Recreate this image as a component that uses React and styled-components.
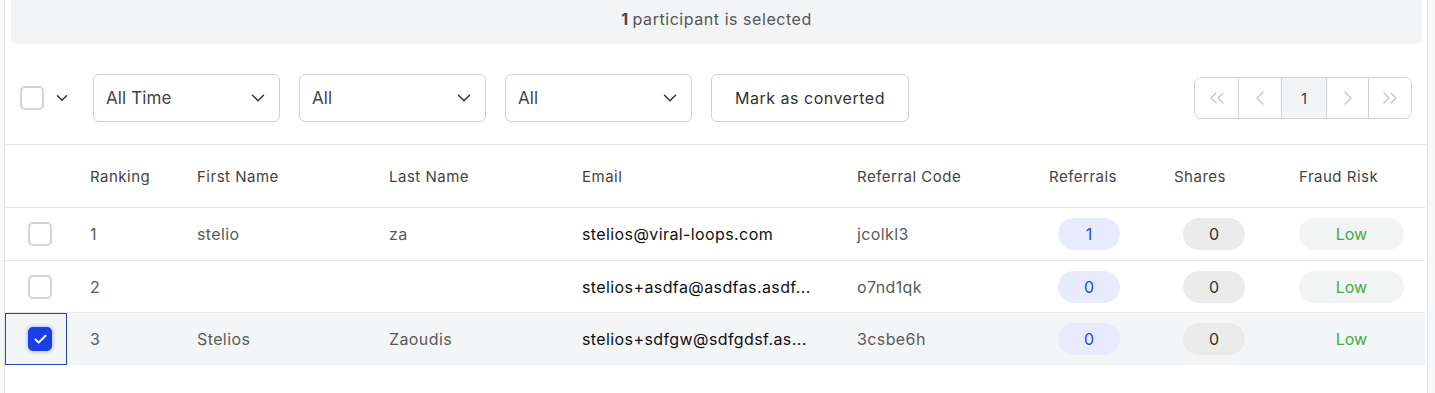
import React from "react";
import styled, { createGlobalStyle } from "styled-components";
import {
  ChevronDown,
  ChevronLeft,
  ChevronRight,
  ChevronsLeft,
  ChevronsRight,
  Check,
} from "lucide-react";

const GlobalStyle = createGlobalStyle`
  body {
    margin: 0;
    background: #f6f7f8;
    font-family: Inter, "Noto Sans", sans-serif;
  }
`;

//Outer page with side gutters
const Page = styled.div`
  padding: 0 7px 0 4px;
`;

//White panel holding everything
const Panel = styled.div`
  background: #fff;
  border-left: 1px solid #e4e5e7;
  border-right: 1px solid #e4e5e7;
  height: 393px;
  box-sizing: border-box;
`;

//Grey strip with the selection count
const Banner = styled.div`
  margin: 0 5px 0 6px;
  height: 44px;
  background: #f3f4f6;
  border-radius: 0 0 6px 6px;
  display: flex;
  align-items: center;
  justify-content: center;
  font-size: 16px;
  letter-spacing: 0.55px;
  color: #555;
  padding-bottom: 6px;
  box-sizing: border-box;

  b {
    color: #444;
    font-weight: 700;
    margin-right: 4px;
  }
`;

const Toolbar = styled.div`
  height: 101px;
  box-sizing: border-box;
  padding: 30px 15px 0 15px;
  display: flex;
  align-items: flex-start;
  border-bottom: 1px solid #e6e7e9;
`;

const ToolbarRow = styled.div`
  height: 48px;
  display: flex;
  align-items: center;
  flex: 1;
`;

const BulkPicker = styled.div`
  display: flex;
  align-items: center;
  gap: 9px;
  margin-right: 22px;
  color: #333;
`;

//Checkbox square, checked state is blue
const Box = styled.span`
  width: 24px;
  height: 24px;
  box-sizing: border-box;
  border-radius: 5px;
  display: inline-flex;
  align-items: center;
  justify-content: center;
  border: ${(p) => (p.checked ? "none" : "2px solid #d3d4d6")};
  background: ${(p) => (p.checked ? "#1a3fe6" : "#fff")};
  box-shadow: ${(p) => (p.checked ? "0 0 4px rgba(26,63,230,0.45)" : "none")};
  color: #fff;
`;

const Select = styled.div`
  width: 187px;
  height: 48px;
  box-sizing: border-box;
  border: 1px solid #cfd0d2;
  border-radius: 6px;
  display: flex;
  align-items: center;
  justify-content: space-between;
  padding: 0 10px 0 12px;
  margin-right: 19px;
  font-size: 17px;
  letter-spacing: 0.1px;
  color: #444;
`;

const Button = styled.div`
  width: 198px;
  height: 48px;
  box-sizing: border-box;
  border: 1px solid #cfd0d2;
  border-radius: 6px;
  display: flex;
  align-items: center;
  justify-content: center;
  font-size: 16px;
  letter-spacing: 0.5px;
  color: #333;
`;

const Pager = styled.div`
  margin-left: auto;
  display: flex;
  height: 42px;
  box-sizing: border-box;
  border: 1px solid #cfd0d2;
  border-radius: 7px;
  overflow: hidden;
`;

const PageCell = styled.div`
  width: ${(p) => p.w}px;
  box-sizing: border-box;
  display: flex;
  align-items: center;
  justify-content: center;
  border-left: ${(p) => (p.first ? "none" : "1px solid #cfd0d2")};
  background: ${(p) => (p.active ? "#f3f4f6" : "#fff")};
  color: ${(p) => (p.active ? "#333" : "#c4c5c7")};
  font-size: 14px;
`;

const cols = "62px 107px 192px 193px 275px 192px 125px 125px 149px";

const HeadRow = styled.div`
  display: grid;
  grid-template-columns: ${cols};
  height: 63px;
  box-sizing: border-box;
  align-items: center;
  border-bottom: 1px solid #e6e7e9;
  margin-right: 2px;
`;

const HeadCell = styled.div`
  padding-left: 23px;
  font-size: 15px;
  letter-spacing: 0.5px;
  color: #444;
`;

const Row = styled.div`
  display: grid;
  grid-template-columns: ${cols};
  height: ${(p) => p.h}px;
  box-sizing: border-box;
  align-items: stretch;
  border-bottom: ${(p) => (p.last ? "none" : "1px solid #e6e7e9")};
  background: ${(p) => (p.selected ? "#f3f5f7" : "#fff")};
  margin-right: 2px;
`;

const Cell = styled.div`
  padding-left: 23px;
  display: flex;
  align-items: center;
  font-size: 16px;
  letter-spacing: 0.4px;
  color: ${(p) => (p.dark ? "#111" : "#5a5a5a")};
  white-space: nowrap;
  overflow: hidden;
`;

const CheckCell = styled.div`
  display: flex;
  align-items: center;
  padding-left: 22px;
  box-sizing: border-box;
  border: ${(p) => (p.focused ? "1px solid #1f47b8" : "1px solid transparent")};
`;

const Pill = styled.span`
  display: inline-flex;
  align-items: center;
  justify-content: center;
  width: ${(p) => p.w || 62}px;
  height: 32px;
  border-radius: 16px;
  margin-left: ${(p) => p.ml || 0}px;
  font-size: 16px;
  letter-spacing: 0;
  background: ${(p) => p.bg};
  color: ${(p) => p.fg};
`;

const rows = [
  { rank: 1, first: "stelio", last: "za", email: "stelios@viral-loops.com", code: "jcolkl3", refs: 1, h: 53 },
  { rank: 2, first: "", last: "", email: "stelios+asdfa@asdfas.asdf...", code: "o7nd1qk", refs: 0, h: 52 },
  { rank: 3, first: "Stelios", last: "Zaoudis", email: "stelios+sdfgw@sdfgdsf.as...", code: "3csbe6h", refs: 0, h: 52, selected: true },
];

export default function App() {
  return (
    <Page>
      <GlobalStyle />
      <Panel>
        <Banner>
          <b>1</b> participant is selected
        </Banner>
        <Toolbar>
          <ToolbarRow>
            <BulkPicker>
              <Box />
              <ChevronDown size={18} strokeWidth={2} />
            </BulkPicker>
            <Select>
              All Time <ChevronDown size={22} strokeWidth={1.6} color="#333" />
            </Select>
            <Select>
              All <ChevronDown size={22} strokeWidth={1.6} color="#333" />
            </Select>
            <Select>
              All <ChevronDown size={22} strokeWidth={1.6} color="#333" />
            </Select>
            <Button>Mark as converted</Button>
            <Pager>
              <PageCell w={43} first>
                <ChevronsLeft size={24} strokeWidth={1.3} />
              </PageCell>
              <PageCell w={43}>
                <ChevronLeft size={24} strokeWidth={1.3} />
              </PageCell>
              <PageCell w={45} active>
                1
              </PageCell>
              <PageCell w={42}>
                <ChevronRight size={24} strokeWidth={1.3} />
              </PageCell>
              <PageCell w={43}>
                <ChevronsRight size={24} strokeWidth={1.3} />
              </PageCell>
            </Pager>
          </ToolbarRow>
        </Toolbar>
        <HeadRow>
          <div />
          <HeadCell>Ranking</HeadCell>
          <HeadCell>First Name</HeadCell>
          <HeadCell>Last Name</HeadCell>
          <HeadCell>Email</HeadCell>
          <HeadCell>Referral Code</HeadCell>
          <HeadCell>Referrals</HeadCell>
          <HeadCell>Shares</HeadCell>
          <HeadCell>Fraud Risk</HeadCell>
        </HeadRow>
        {rows.map((r, i) => (
          <Row key={r.rank} h={r.h} selected={r.selected} last={i === rows.length - 1}>
            <CheckCell focused={r.selected}>
              <Box checked={r.selected}>
                {r.selected && <Check size={15} strokeWidth={3.2} />}
              </Box>
            </CheckCell>
            <Cell>{r.rank}</Cell>
            <Cell>{r.first}</Cell>
            <Cell>{r.last}</Cell>
            <Cell dark>{r.email}</Cell>
            <Cell>{r.code}</Cell>
            <Cell>
              <Pill ml={9} bg="#e8ebfd" fg="#2a48d4">
                {r.refs}
              </Pill>
            </Cell>
            <Cell>
              <Pill ml={9} bg="#ebebeb" fg="#333">
                0
              </Pill>
            </Cell>
            <Cell>
              <Pill w={105} bg={r.selected ? "#f3f5f7" : "#f2f3f3"} fg="#3dae3d">
                Low
              </Pill>
            </Cell>
          </Row>
        ))}
      </Panel>
    </Page>
  );
}
